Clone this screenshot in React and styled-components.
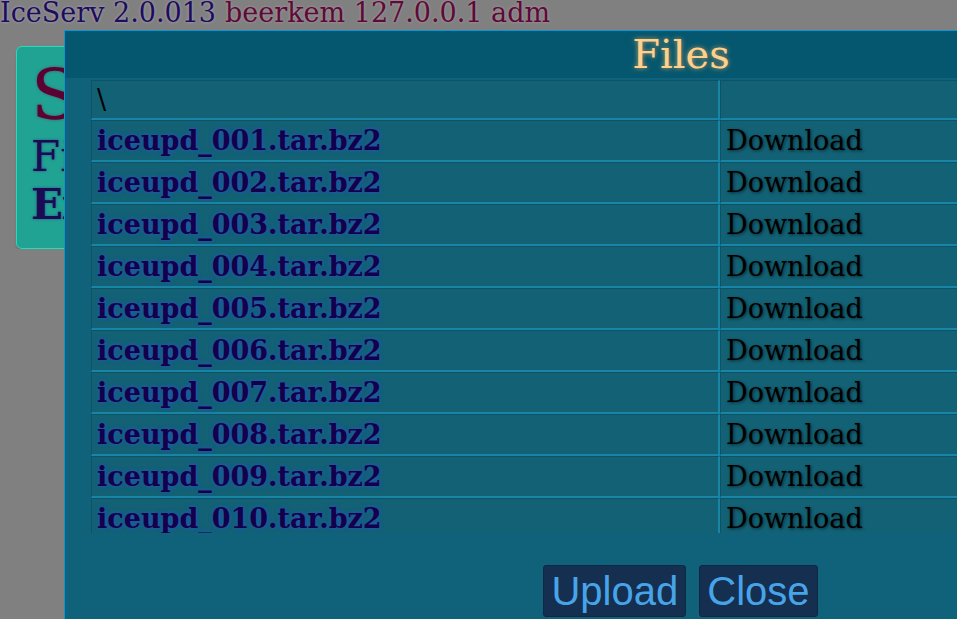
import React from "react";
import styled, { createGlobalStyle } from "styled-components";

const GlobalStyle = createGlobalStyle`
  html, body {
    margin: 0;
    padding: 0;
    background: #808080;
    font-family: "DejaVu Serif", serif;
    overflow: hidden;
  }
`;

const TopBar = styled.div`
  height: 30px;
  font-size: 27px;
  line-height: 26px;
  white-space: nowrap;
  margin-left: 0;
`;

const Brand = styled.span`
  color: #1e0c5c;
  text-shadow: 0 0 3px rgba(200, 200, 230, 0.6);
`;

const UserInfo = styled.span`
  color: #5c0a38;
  text-shadow: 0 0 3px rgba(230, 180, 200, 0.5);
  margin-left: 9px;
`;

const Card = styled.div`
  margin: 16px 0 0 16px;
  width: 300px;
  height: 203px;
  box-sizing: border-box;
  padding: 10px 14px;
  background: #21a393;
  border: 1px solid #2ad8bc;
  border-radius: 6px;
  box-shadow: 4px 6px 6px rgba(0, 0, 0, 0.45);
`;

const CardTitle = styled.div`
  font-size: 70px;
  line-height: 76px;
  color: #5a0032;
  text-shadow: 0 0 3px rgba(120, 0, 60, 0.5);
`;

const CardLine = styled.div`
  font-size: 42px;
  line-height: 48px;
  color: #1c0a55;
  font-weight: ${(p) => (p.$bold ? "bold" : "normal")};
  text-shadow: 0 0 3px rgba(40, 20, 120, 0.5);
`;

const Modal = styled.div`
  position: fixed;
  top: 30px;
  left: 64px;
  width: 1232px;
  height: 640px;
  background: #10627a;
  border: 1px solid #0b97d6;
  display: flex;
  flex-direction: column;
`;

const ModalHeader = styled.div`
  height: 47px;
  flex-shrink: 0;
  background: #05576f;
  text-align: center;
  font-size: 40px;
  line-height: 46px;
  color: #ffd08c;
  text-shadow: 0 0 5px rgba(255, 180, 90, 0.75);
`;

const ScrollArea = styled.div`
  height: 453px;
  flex-shrink: 0;
  overflow: hidden;
  padding: 2px 26px 0 26px;
`;

const Table = styled.table`
  border-collapse: separate;
  border-spacing: 0;
  table-layout: fixed;
  width: 1179px;
`;

const Cell = styled.td`
  box-sizing: border-box;
  height: ${(p) => (p.$head ? 40 : 42)}px;
  padding: 0 5px;
  background: #126175;
  border-top: 1px solid #0c5366;
  border-left: 1px solid #0c5366;
  border-right: 2px solid #1884a6;
  border-bottom: 2px solid #1884a6;
  font-size: 27px;
  line-height: 30px;
  vertical-align: middle;
  white-space: nowrap;
  color: #000;
`;

const FileName = styled.span`
  font-weight: bold;
  color: #14004a;
  text-shadow: 0 0 4px rgba(40, 80, 220, 0.85);
`;

const DownloadLink = styled.span`
  color: #000;
  text-shadow: 1px 1px 3px rgba(0, 0, 0, 0.55);
  cursor: pointer;
`;

const Footer = styled.div`
  display: flex;
  justify-content: center;
  gap: 13px;
  padding-top: 32px;
  padding-right: 1px;
`;

const Button = styled.button`
  font-family: "Liberation Sans", Arial, sans-serif;
  font-size: 40px;
  line-height: 50px;
  padding: 0 7px;
  color: #48a4e8;
  background: #152f50;
  border: 1px solid #0e2744;
  border-radius: 3px;
  cursor: pointer;
`;

const files = Array.from(
  { length: 10 },
  (_, i) => `iceupd_${String(i + 1).padStart(3, "0")}.tar.bz2`
);

const App = () => {
  return (
    <>
      <GlobalStyle />
      <TopBar>
        <Brand>IceServ 2.0.013</Brand>
        <UserInfo>beerkem 127.0.0.1 adm</UserInfo>
      </TopBar>
      <Card>
        <CardTitle>Settings</CardTitle>
        <CardLine>Files</CardLine>
        <CardLine $bold>Exit</CardLine>
      </Card>
      <Modal>
        <ModalHeader>Files</ModalHeader>
        <ScrollArea>
          <Table>
            <colgroup>
              <col style={{ width: 629 }} />
              <col />
            </colgroup>
            <tbody>
              <tr>
                <Cell $head>\</Cell>
                <Cell $head />
              </tr>
              {files.map((f) => (
                <tr key={f}>
                  <Cell>
                    <FileName>{f}</FileName>
                  </Cell>
                  <Cell>
                    <DownloadLink>Download</DownloadLink>
                  </Cell>
                </tr>
              ))}
            </tbody>
          </Table>
        </ScrollArea>
        <Footer>
          <Button>Upload</Button>
          <Button>Close</Button>
        </Footer>
      </Modal>
    </>
  );
};

export default App;
